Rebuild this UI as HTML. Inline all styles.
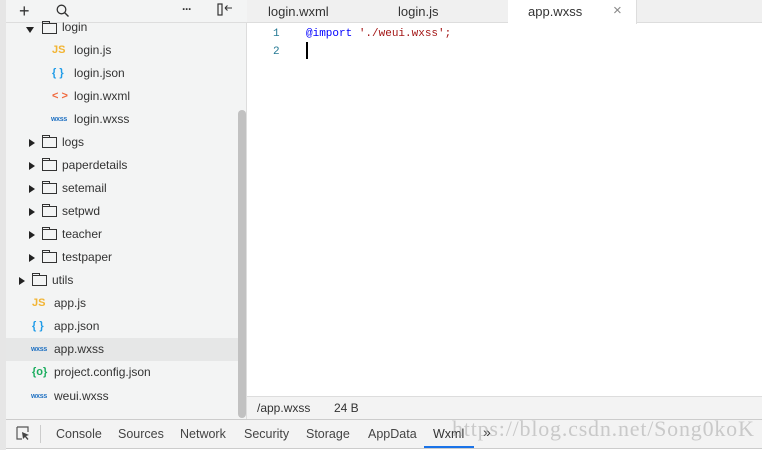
<!DOCTYPE html>
<html><head><meta charset="utf-8"><style>
*{margin:0;padding:0;box-sizing:border-box}
body{width:762px;height:450px;overflow:hidden;background:#fff;font-family:"Liberation Sans",Arial,sans-serif;font-size:12px;color:#333;position:relative}
.a{position:absolute}
#side{left:0;top:0;width:247px;height:419px;background:#f3f4f4;border-right:1px solid #ddd}
#strip{left:0;top:0;width:6px;height:450px;background:#e6e6e6}
.row{position:absolute;left:6px;width:232px;height:23px;line-height:23px;font-size:12px;color:#333}
.row span{position:absolute}
.tri{width:0;height:0;border-left:6px solid #222;border-top:4px solid transparent;border-bottom:4px solid transparent;top:8px}
.fold{width:15px;height:11px;border:1px solid #333;top:6px}
.fold:before{content:"";position:absolute;left:-1px;top:-3px;width:6px;height:2px;border:1px solid #333;border-bottom:none}
.ic{font-size:11px;font-weight:bold}
.wx{font-size:7px;font-weight:bold;color:#1c6fc2;letter-spacing:-0.3px}
</style></head><body>
<div id="side" class="a"></div>
<div id="strip" class="a"></div>
<div class="a" style="left:6px;top:0;width:241px;height:23px;border-bottom:1px solid #ddd;background:#f3f4f4"></div>
<div class="a" style="left:19px;top:2px;font-size:18px;color:#333;line-height:18px">+</div>
<svg class="a" style="left:56px;top:4px" width="14" height="14"><circle cx="5.5" cy="5.5" r="4.3" fill="none" stroke="#333" stroke-width="1.3"/><line x1="8.5" y1="8.5" x2="12.5" y2="12.5" stroke="#333" stroke-width="1.4"/></svg>
<div class="a" style="left:182px;top:2px;font-size:12px;font-weight:bold;letter-spacing:-1px">···</div>
<svg class="a" style="left:217px;top:3px" width="16" height="14"><rect x="1" y="1" width="4" height="11" fill="none" stroke="#333" stroke-width="1.2"/><path d="M8 5H15M8 5L10.5 2.5M8 5L10.5 7.5" stroke="#333" fill="none" stroke-width="1.1"/></svg>
<div class="row" style="top:16px"><span class="tri" style="left:21px;top:10px;transform:rotate(90deg)"></span><span class="fold" style="left:36px;top:7px"></span><span style="left:56px">login</span></div>
<div class="row" style="top:39px"><span class="ic" style="left:46px;color:#f2b433">JS</span><span style="left:68px">login.js</span></div>
<div class="row" style="top:62px"><span class="ic" style="left:46px;color:#1e9be8">{ }</span><span style="left:68px">login.json</span></div>
<div class="row" style="top:85px"><span class="ic" style="left:46px;color:#f0683c">&lt; &gt;</span><span style="left:68px">login.wxml</span></div>
<div class="row" style="top:108px"><span class="wx" style="left:45px">wxss</span><span style="left:68px">login.wxss</span></div>
<div class="row" style="top:131px"><span class="tri" style="left:23px"></span><span class="fold" style="left:36px"></span><span style="left:56px">logs</span></div>
<div class="row" style="top:154px"><span class="tri" style="left:23px"></span><span class="fold" style="left:36px"></span><span style="left:56px">paperdetails</span></div>
<div class="row" style="top:177px"><span class="tri" style="left:23px"></span><span class="fold" style="left:36px"></span><span style="left:56px">setemail</span></div>
<div class="row" style="top:200px"><span class="tri" style="left:23px"></span><span class="fold" style="left:36px"></span><span style="left:56px">setpwd</span></div>
<div class="row" style="top:223px"><span class="tri" style="left:23px"></span><span class="fold" style="left:36px"></span><span style="left:56px">teacher</span></div>
<div class="row" style="top:246px"><span class="tri" style="left:23px"></span><span class="fold" style="left:36px"></span><span style="left:56px">testpaper</span></div>
<div class="row" style="top:269px"><span class="tri" style="left:13px"></span><span class="fold" style="left:26px"></span><span style="left:46px">utils</span></div>
<div class="row" style="top:292px"><span class="ic" style="left:26px;color:#f2b433">JS</span><span style="left:48px">app.js</span></div>
<div class="row" style="top:315px"><span class="ic" style="left:26px;color:#1e9be8">{ }</span><span style="left:48px">app.json</span></div>
<div class="row" style="top:338px;background:#e6e7e7"><span class="wx" style="left:25px">wxss</span><span style="left:48px">app.wxss</span></div>
<div class="row" style="top:361px"><span class="ic" style="left:26px;color:#1aad5e">{o}</span><span style="left:48px">project.config.json</span></div>
<div class="row" style="top:385px"><span class="wx" style="left:25px">wxss</span><span style="left:48px">weui.wxss</span></div>
<div class="a" style="left:238px;top:110px;width:8px;height:308px;background:#c1c1c1;border-radius:4px"></div>
<div class="a" style="left:247px;top:0;width:515px;height:23px;background:#f0f0f0;border-bottom:1px solid #ddd"></div>
<div class="a" style="left:268px;top:4px;font-size:13px">login.wxml</div>
<div class="a" style="left:398px;top:4px;font-size:13px">login.js</div>
<div class="a" style="left:508px;top:0;width:129px;height:24px;background:#fff;border-right:1px solid #ddd"></div>
<div class="a" style="left:528px;top:4px;font-size:13px">app.wxss</div>
<div class="a" style="left:613px;top:2px;font-size:15px;color:#888">×</div>
<div class="a" style="left:273px;top:25px;font-family:'Liberation Mono',monospace;font-size:11px;color:#237893;line-height:18px">1<br>2</div>
<div class="a" style="left:306px;top:25px;font-family:'Liberation Mono',monospace;font-size:11px;line-height:18px;color:#a31515"><span style="color:#0000ff">@import</span> './weui.wxss';</div>
<div class="a" style="left:306px;top:42px;width:2px;height:17px;background:#000"></div>
<div class="a" style="left:247px;top:396px;width:515px;height:23px;background:#f3f3f3;border-top:1px solid #ddd"></div>
<div class="a" style="left:257px;top:401px;font-size:12px">/app.wxss</div>
<div class="a" style="left:334px;top:401px;font-size:12px">24 B</div>
<div class="a" style="left:6px;top:419px;width:756px;height:30px;background:#f3f3f3;border-top:1px solid #ccc;border-bottom:1px solid #ccc"></div>
<svg class="a" style="left:16px;top:426px" width="15" height="15"><path d="M1 1H12V6M6 13H1V1" fill="none" stroke="#555" stroke-width="1.2"/><path d="M6 6L13 9L10 10L12.5 13L11.5 14L9 11L7 13Z" fill="#444"/></svg>
<div class="a" style="left:40px;top:425px;width:1px;height:18px;background:#ccc"></div>
<div class="a" style="top:427px;left:56px;font-size:12.5px;color:#444">Console</div>
<div class="a" style="top:427px;left:118px;font-size:12.5px;color:#444">Sources</div>
<div class="a" style="top:427px;left:180px;font-size:12.5px;color:#444">Network</div>
<div class="a" style="top:427px;left:244px;font-size:12.5px;color:#444">Security</div>
<div class="a" style="top:427px;left:306px;font-size:12.5px;color:#444">Storage</div>
<div class="a" style="top:427px;left:368px;font-size:12.5px;color:#444">AppData</div>
<div class="a" style="top:427px;left:433px;font-size:12.5px;color:#333">Wxml</div>
<div class="a" style="left:424px;top:446px;width:50px;height:2px;background:#1a73e8"></div>
<div class="a" style="top:424px;left:483px;font-size:14px;color:#333">»</div>
<div class="a" style="top:416px;left:452px;font-family:'Liberation Serif',serif;font-size:22px;color:rgba(160,160,160,0.5);letter-spacing:0.8px">https://blog.csdn.net/Song0koK</div>
</body></html>
